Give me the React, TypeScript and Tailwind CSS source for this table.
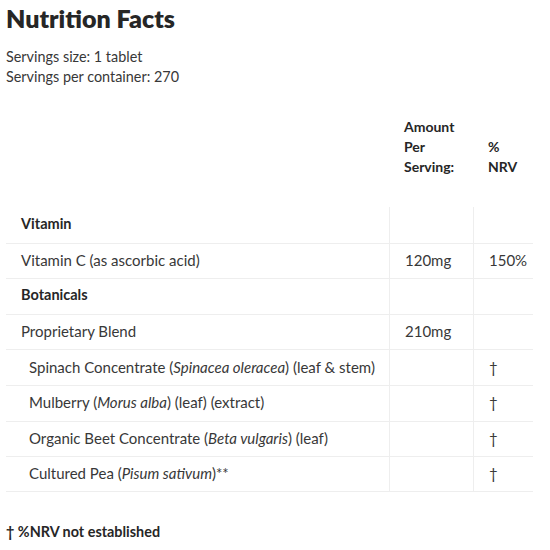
const rows: { name: React.ReactNode; amount?: string; nrv?: string; bold?: boolean; indent?: boolean }[] = [
  { name: "Vitamin", bold: true },
  { name: "Vitamin C (as ascorbic acid)", amount: "120mg", nrv: "150%" },
  { name: "Botanicals", bold: true },
  { name: "Proprietary Blend", amount: "210mg" },
  {
    name: (
      <>
        Spinach Concentrate (<i>Spinacea oleracea</i>) (leaf &amp; stem)
      </>
    ),
    nrv: "†",
    indent: true,
  },
  {
    name: (
      <>
        Mulberry (<i>Morus alba</i>) (leaf) (extract)
      </>
    ),
    nrv: "†",
    indent: true,
  },
  {
    name: (
      <>
        Organic Beet Concentrate (<i>Beta vulgaris</i>) (leaf)
      </>
    ),
    nrv: "†",
    indent: true,
  },
  {
    name: (
      <>
        Cultured Pea (<i>Pisum sativum</i>)**
      </>
    ),
    nrv: "†",
    indent: true,
  },
];

export default function App() {
  return (
    <div className="w-[550px] h-[550px] bg-white px-[6px] pt-[2px] text-[#383838] font-['Lato',sans-serif] overflow-hidden">
      <h1 className="text-[25px] leading-[32px] font-extrabold text-[#262626]">Nutrition Facts</h1>

      <div className="mt-[13px] text-[14.4px] leading-[20px]">
        <p>Servings size: 1 tablet</p>
        <p>Servings per container: 270</p>
      </div>

      <div className="w-[527px]">
        {/* header */}
        <div className="grid grid-cols-[383px_84px_60px] py-[30px] text-[14px] leading-[20px] font-bold text-[#262626]">
          <div />
          <div className="pl-[15px]">
            Amount
            <br />
            Per
            <br />
            Serving:
          </div>
          <div className="pl-[15px] pt-[20px]">
            %
            <br />
            NRV
          </div>
        </div>

        {rows.map((r, i) => (
          <div
            key={i}
            className={`grid grid-cols-[383px_84px_60px] h-[35.6px] text-[15px] leading-[20px] ${
              i === 0 ? "" : "border-t border-[#eeeeee]"
            } ${i === rows.length - 1 ? "border-b border-b-[#eeeeee]" : ""}`}
          >
            <div
              className={`flex items-center pb-[2px] ${r.indent ? "pl-[23px]" : "pl-[15px]"} ${
                r.bold ? "font-bold text-[#262626] text-[14.5px]" : ""
              }`}
            >
              <span>{r.name}</span>
            </div>
            <div className="flex items-center pb-[2px] pl-[15px] border-l border-[#eeeeee]">{r.amount}</div>
            <div className="flex items-center pb-[2px] pl-[15px] border-l border-[#eeeeee]">{r.nrv}</div>
          </div>
        ))}
      </div>

      <p className="mt-[30px] text-[14.4px] leading-[20px] font-bold text-[#262626]">† %NRV not established</p>
    </div>
  );
}
